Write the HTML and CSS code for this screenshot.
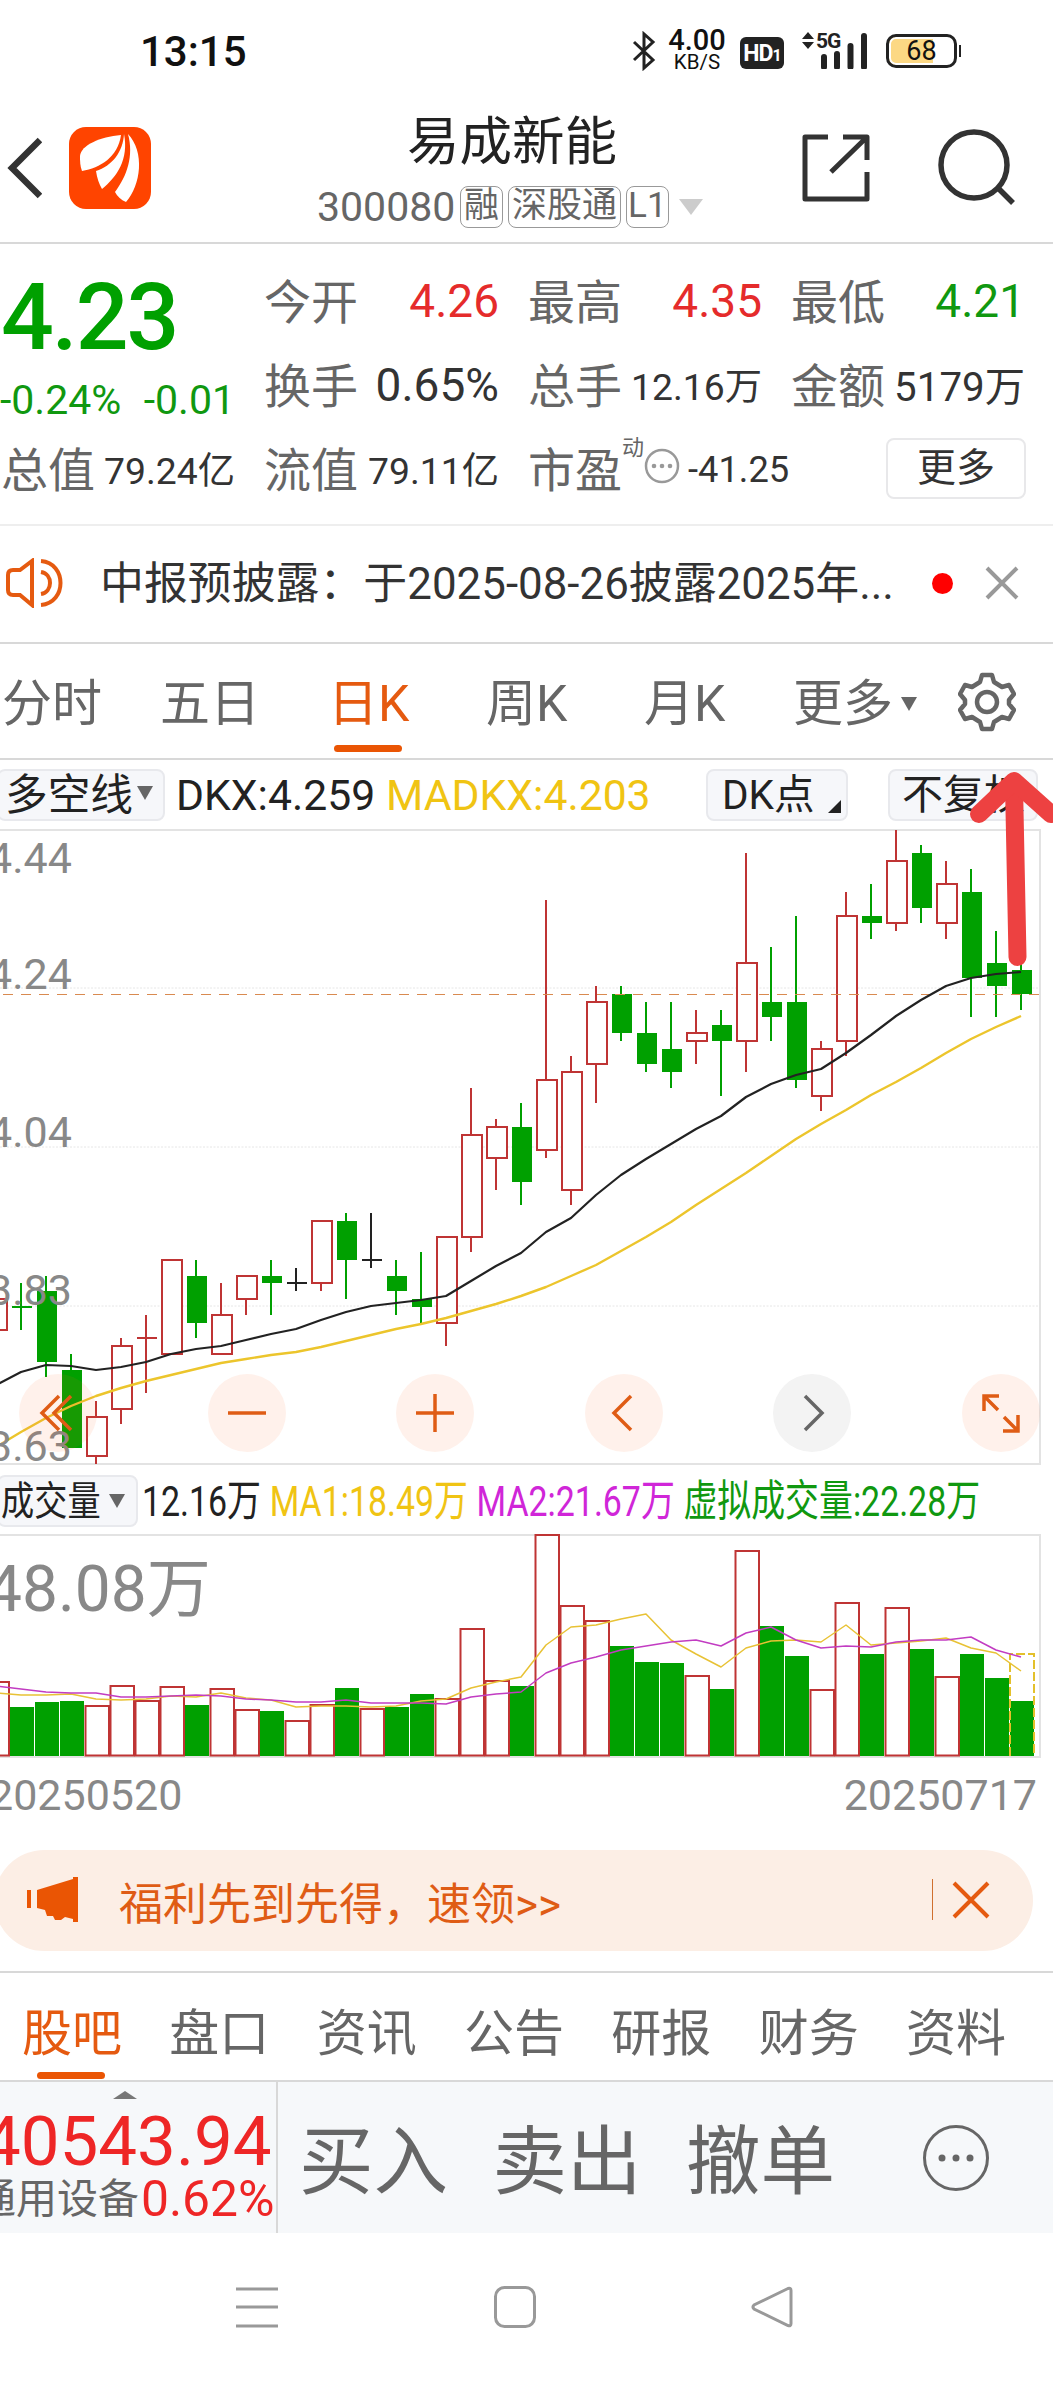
FILE: index.html
```html
<!DOCTYPE html>
<html lang="zh-CN">
<head>
    <meta charset="UTF-8">
    <meta name="viewport" content="width=device-width, initial-scale=1.0">
    <title>易成新能 300080</title>
    <link rel="stylesheet" href="styles.css">
</head>
<body>
<div class="page">

    <!-- Status bar -->
    <div class="status">
        <span class="clock">13:15</span>
        <div class="status-right">
            <svg class="bt" width="24" height="40" viewBox="0 0 24 40"><path d="M2 11l19 18-9 8V3l9 8L2 29" fill="none" stroke="#222" stroke-width="3"/></svg>
            <div class="speed"><b>4.00</b><i>KB/S</i></div>
            <span class="hd">HD<small>1</small></span>
            <svg class="signal" width="68" height="38" viewBox="0 0 68 38">
                <path d="M1 8l6-7 6 7zM1 11l6 7 6-7z" fill="#222"/>
                <text x="15" y="17" font-size="21">5G</text>
                <path d="M23 26v10M36 23v13M49.500 15v21M63 5v31" stroke="#222" stroke-width="6" stroke-linecap="round"/>
            </svg>
            <div class="battery"><span>68</span></div>
        </div>
    </div>

    <!-- Header -->
    <header class="header">
        <svg class="back" width="36" height="62" viewBox="0 0 36 62"><path d="M34 3L6 31l28 28" fill="none" stroke="#333" stroke-width="6.500"/></svg>
        <svg class="logo" width="82" height="82" viewBox="0 0 82 82">
            <rect width="82" height="82" rx="17" fill="#ff4400"/>
            <path d="M52 8C31 10 12 18 11 29c0 5 0 10 2 15 18-3 36-14 39-36z" fill="#fff"/>
            <path d="M55 7c-1 18-12 32-28 37 1 7 3 13 6 18C48 50 60 32 55 7z" fill="#fff"/>
            <path d="M59 7c6 22-1 42-13 58 2 4 6 8 11 10C72 58 76 25 59 7z" fill="#fff"/>
        </svg>
        <div class="title">
            <h1>易成新能</h1>
            <div class="code">
                <span>300080</span><em>融</em><em>深股通</em><em class="level">L1</em>
                <i class="tri-down"></i>
            </div>
        </div>
        <svg class="share" width="68" height="68" viewBox="0 0 68 68"><path d="M26 3H3v62h62V38M41 3h24v23M64 4L29 38" fill="none" stroke="#333" stroke-width="5" stroke-linejoin="round"/></svg>
        <svg class="search" width="78" height="78" viewBox="0 0 78 78"><circle cx="36" cy="36" r="33" fill="none" stroke="#333" stroke-width="5.500"/><path d="M59 58l16 16" stroke="#333" stroke-width="5.500"/></svg>
    </header>

    <!-- Quote -->
    <section class="quote">
        <div class="price">
            <strong>4.23</strong>
            <div><span>-0.24%</span><span>-0.01</span></div>
        </div>
        <div class="cell"><label>今开</label><b class="up">4.26</b></div>
        <div class="cell"><label>最高</label><b class="up">4.35</b></div>
        <div class="cell"><label>最低</label><b class="down">4.21</b></div>
        <div class="cell"><label>换手</label><b>0.65%</b></div>
        <div class="cell"><label>总手</label><b class="s37">12.16万</b></div>
        <div class="cell"><label>金额</label><b class="s40">5179万</b></div>
        <div class="cell"><label>总值</label><b class="s37">79.24亿</b></div>
        <div class="cell"><label>流值</label><b class="s37">79.11亿</b></div>
        <div class="cell pe">
            <label>市盈</label><sup>动</sup>
            <svg width="36" height="36" viewBox="0 0 36 36"><circle cx="18" cy="18" r="16" fill="none" stroke="#999" stroke-width="2.500"/><g fill="#999"><circle cx="10" cy="18" r="2.300"/><circle cx="18" cy="18" r="2.300"/><circle cx="26" cy="18" r="2.300"/></g></svg>
            <b>-41.25</b>
        </div>
        <div class="cell"><button class="more">更多</button></div>
    </section>

    <!-- Notice -->
    <section class="notice">
        <svg width="58" height="50" viewBox="0 0 58 50" fill="none" stroke="#e55a10" stroke-width="4">
            <path d="M26 3v44L14 37H7q-5 0-5-5V17q0-5 5-5h7z"/>
            <path d="M35 3c26 2 26 42 0 44M35 14c12 2 12 20 0 22"/>
        </svg>
        <p>中报预披露：于2025-08-26披露2025年...</p>
        <i class="dot"></i>
        <svg class="close" width="34" height="34" viewBox="0 0 34 34"><path d="M2 2l30 30M32 2L2 32" stroke="#999" stroke-width="4"/></svg>
    </section>

    <!-- Period tabs -->
    <nav class="periods">
        <a>分时</a><a>五日</a><a class="active">日K</a><a>周K</a><a>月K</a>
        <a>更多<i class="tri-small"></i></a>
        <svg width="58" height="60" viewBox="0 0 58 60" fill="none" stroke="#666" stroke-width="4.500">
            <path d="M24 3h10l2 7 8 5 7-2 5 9-5 6v4l5 6-5 9-7-2-8 5-2 7H24l-2-7-8-5-7 2-5-9 5-6v-4l-5-6 5-9 7 2 8-5z" stroke-linejoin="round"/>
            <circle cx="29" cy="30" r="10"/>
        </svg>
    </nav>

    <!-- K line -->
    <div class="indicators">
        <span class="pill pill-left">多空线<i class="tri-small"></i></span>
        <span class="dkx">DKX:4.259</span>
        <span class="madkx">MADKX:4.203</span>
        <span class="pill pill-dk">DK点<i class="corner"></i></span>
        <span class="pill pill-fq">不复权</span>
    </div>

    <section class="kline">
        <svg id="kline" width="1053" height="636" viewBox="0 829 1053 636"></svg>
        <span class="scale s1">4.44</span>
        <span class="scale s2">4.24</span>
        <span class="scale s3">4.04</span>
        <span class="scale s4">3.83</span>
        <span class="scale s5">3.63</span>
        <div class="tools">
            <svg viewBox="0 0 78 78"><path d="M40 22L23 39l17 17M52 22L35 39l17 17"/></svg>
            <svg viewBox="0 0 78 78"><path d="M20 39h38"/></svg>
            <svg viewBox="0 0 78 78"><path d="M20 39h38M39 20v38"/></svg>
            <svg viewBox="0 0 78 78"><path d="M46 22L29 39l17 17"/></svg>
            <svg class="off" viewBox="0 0 78 78"><path d="M32 22l17 17-17 17"/></svg>
            <svg viewBox="0 0 78 78"><path d="M37 22H22v15M23 23l13 13M41 57h15V41M55 56L42 43"/></svg>
        </div>
    </section>

    <!-- Volume -->
    <div class="indicators volume-line">
        <span class="pill pill-vol"><u>成交量</u><i class="tri-small"></i></span>
        <div class="narrow">
            <span>12.16万</span>
            <span class="madkx">MA1:18.49万</span>
            <span class="purple">MA2:21.67万</span>
            <span class="green">虚拟成交量:22.28万</span>
        </div>
    </div>
    <section class="volume">
        <svg id="volume" width="1053" height="224" viewBox="0 1534 1053 224"></svg>
        <span class="vol-max">48.08万</span>
    </section>
    <div class="dates"><span>20250520</span><span>20250717</span></div>

    <!-- Banner -->
    <section class="banner">
        <svg width="52" height="46" viewBox="0 0 52 46" fill="#ea5504"><path d="M0 13h4v18H0zM10 13L46 2V0h5v45h-5v-3l-8-2-4 3h-6l-2-4h-6l-2-6-8-2z"/></svg>
        <p>福利先到先得，速领&gt;&gt;</p>
        <i></i>
        <svg class="close" width="38" height="38" viewBox="0 0 38 38"><path d="M2 2l34 34M36 2L2 36" stroke="#e55a10" stroke-width="4"/></svg>
    </section>

    <nav class="tabs">
        <a class="active">股吧</a><a>盘口</a><a>资讯</a><a>公告</a><a>研报</a><a>财务</a><a>资料</a>
    </nav>

    <!-- Bottom bar -->
    <footer class="trade">
        <div class="index">
            <i class="tri-up"></i>
            <strong>40543.94</strong>
            <div><span>通用设备</span><b>0.62%</b></div>
        </div>
        <a>买入</a><a>卖出</a><a>撤单</a>
        <svg width="68" height="68" viewBox="0 0 68 68"><circle cx="34" cy="34" r="31.500" fill="none" stroke="#666" stroke-width="3"/><g fill="#666"><circle cx="20" cy="34" r="3.500"/><circle cx="34" cy="34" r="3.500"/><circle cx="48" cy="34" r="3.500"/></g></svg>
    </footer>

    <div class="system">
        <svg viewBox="0 0 44 44"><path d="M1 4h42M1 22h42M1 41h42"/></svg>
        <svg viewBox="0 0 44 44"><rect x="2.500" y="2.500" width="39" height="39" rx="9"/></svg>
        <svg viewBox="0 0 44 44"><path d="M38 3.500L4 20q-2 2 0 4l34 16.500q3 1 3-2v-33q0-3-3-2z"/></svg>
    </div>

    <!-- Hint arrow pointing at the settings icon -->
    <svg class="arrow" width="85" height="200" viewBox="968 768 85 200" fill="none" stroke="#ed4141" stroke-width="18" stroke-linecap="round" stroke-linejoin="round">
        <path d="M1014 785L1017.500 957"/>
        <path d="M979 814L1014 781L1051 814"/>
    </svg>
</div>

<script>
    // type (r = up, g = down, k = flat), high, body top, body bottom, low, volume top
    const days = [
        ["r", 1299, 1299, 1330, 1330, 1682], ["g", 1283, 1306, 1308, 1330, 1707],
        ["g", 1276, 1291, 1362, 1377, 1702], ["g", 1354, 1370, 1448, 1448, 1701],
        ["r", 1401, 1417, 1456, 1464, 1706], ["r", 1338, 1346, 1409, 1424, 1686],
        ["r", 1315, 1338, 1338, 1393, 1701], ["r", 1260, 1260, 1354, 1354, 1687],
        ["g", 1260, 1276, 1323, 1338, 1705], ["r", 1283, 1315, 1354, 1354, 1689],
        ["r", 1276, 1276, 1299, 1315, 1710], ["g", 1260, 1276, 1283, 1315, 1711],
        ["k", 1268, 1283, 1283, 1291, 1721], ["r", 1221, 1221, 1283, 1291, 1705],
        ["g", 1213, 1221, 1260, 1299, 1688], ["k", 1213, 1260, 1260, 1268, 1709],
        ["g", 1260, 1276, 1291, 1315, 1707], ["g", 1252, 1299, 1307, 1323, 1694],
        ["r", 1237, 1237, 1323, 1346, 1699], ["r", 1088, 1135, 1237, 1252, 1629],
        ["r", 1119, 1127, 1158, 1190, 1681], ["g", 1103, 1127, 1182, 1205, 1686],
        ["r", 900, 1080, 1150, 1158, 1535], ["r", 1056, 1072, 1190, 1205, 1606],
        ["r", 986, 1002, 1064, 1103, 1621], ["g", 986, 994, 1033, 1041, 1646],
        ["g", 1002, 1033, 1064, 1072, 1662], ["g", 1002, 1049, 1072, 1088, 1663],
        ["r", 1010, 1033, 1041, 1064, 1676], ["g", 1010, 1025, 1041, 1096, 1689],
        ["r", 853, 963, 1041, 1072, 1551], ["g", 947, 1002, 1017, 1041, 1626],
        ["g", 916, 1002, 1080, 1088, 1656], ["r", 1041, 1049, 1096, 1111, 1690],
        ["r", 892, 916, 1041, 1056, 1603], ["g", 884, 916, 923, 939, 1654],
        ["r", 830, 861, 923, 931, 1608], ["g", 845, 853, 908, 923, 1649],
        ["r", 861, 884, 923, 939, 1677], ["g", 869, 892, 978, 1017, 1654],
        ["g", 931, 963, 986, 1017, 1678], ["g", 960, 970, 994, 1010, 1701]
    ];
    const dkx = [1385, 1372, 1365, 1366, 1370, 1367, 1362, 1354, 1349, 1346, 1340, 1334, 1329, 1320, 1312, 1306, 1303, 1300, 1296, 1281, 1266, 1253, 1232, 1218, 1195, 1175, 1159, 1144, 1129, 1116, 1097, 1084, 1075, 1069, 1053, 1035, 1016, 1000, 986, 978, 974, 972];
    const madkx = [1447, 1432, 1418, 1406, 1396, 1388, 1381, 1375, 1369, 1363, 1359, 1355, 1352, 1347, 1341, 1335, 1329, 1324, 1318, 1311, 1304, 1296, 1287, 1276, 1265, 1251, 1237, 1222, 1205, 1189, 1173, 1156, 1139, 1124, 1110, 1095, 1082, 1068, 1053, 1039, 1027, 1016];
    const ma1 = [1693, 1695, 1695, 1694, 1699, 1700, 1699, 1696, 1697, 1693, 1698, 1700, 1707, 1706, 1706, 1707, 1706, 1701, 1699, 1688, 1682, 1677, 1645, 1627, 1625, 1619, 1614, 1640, 1654, 1667, 1648, 1641, 1640, 1642, 1625, 1645, 1643, 1641, 1638, 1648, 1653, 1671];
    const ma2 = [1686, 1689, 1692, 1693, 1693, 1697, 1697, 1696, 1695, 1696, 1699, 1700, 1702, 1702, 1700, 1703, 1703, 1703, 1704, 1697, 1694, 1692, 1673, 1663, 1657, 1650, 1646, 1642, 1640, 1646, 1633, 1627, 1640, 1648, 1646, 1647, 1642, 1640, 1640, 1637, 1650, 1657];

    const xAt = i => -4 + i * 25;
    const colors = { r: "#bf3434", g: "#00a000", k: "#222" };

    const path = (d, color, width, extra = "") =>
        `<path d="${d}" fill="none" stroke="${color}" stroke-width="${width}" ${extra}/>`;
    const curve = (points, color, width) =>
        path("M" + points.map((y, i) => `${xAt(i)} ${y}`).join("L"), color, width, 'stroke-linejoin="round"');

    const box = (type, x, w, top, bottom) => type === "g"
        ? `<rect x="${x}" y="${top}" width="${w}" height="${bottom - top}" fill="#00a000"/>`
        : `<rect x="${x}" y="${top}" width="${w}" height="${bottom - top}" fill="#fff" stroke="#bf3434" stroke-width="2"/>`;

    // Candles
    let k = path("M0 988H1040M0 1147H1040M0 1306H1040", "#e6e6e6", 1, 'stroke-dasharray="2 1.500"');
    k += path("M0 830H1040V1464H0", "#e3e3e3", 2);
    days.forEach(([type, high, top, bottom, low], i) => {
        const x = xAt(i);
        k += path(`M${x} ${high}V${top}M${x} ${bottom}V${low}`, colors[type], 2);
        k += top === bottom
            ? path(`M${x - 9} ${top}H${x + 11}`, colors[type], 2)
            : box(type, x - 9, 20, top, bottom);
    });
    k += path("M3 994.500H1040", "#d98a50", 1.200, 'stroke-dasharray="10 8"');
    k += curve(dkx, "#222", 2.200) + curve(madkx, "#ecc52c", 2.400);
    document.getElementById("kline").innerHTML = k;

    // Volume
    let v = path("M0 1535H1040V1757H0", "#e3e3e3", 2);
    days.forEach(([type, , , , , top], i) => {
        const x = xAt(i);
        v += type === "g" ? box("g", x - 11, 24, top, 1756) : box("r", x - 10.500, 23.500, top, 1755.500);
    });
    v += path("M1010 1756V1654H1034V1756", "#e3c02b", 2, 'stroke-dasharray="9 3"');
    v += curve(ma1, "#e8c235", 1.500) + curve(ma2, "#c23cc2", 1.500);
    document.getElementById("volume").innerHTML = v;
</script>
</body>
</html>
```

FILE: styles.css
```css
* {
    box-sizing: border-box;
}

body {
    margin: 0;
    background: #fff;
    color: #333;
    font-family: Roboto, "Noto Sans CJK SC", sans-serif;
}

h1, p {
    margin: 0;
    font-weight: 400;
}

b, i, em, u, label, strong {
    font-weight: 400;
    font-style: normal;
    text-decoration: none;
}

svg {
    display: block;
    flex: none;
}

.page {
    position: relative;
    width: 1053px;
    height: 2382px;
    overflow: hidden;
    display: flex;
    flex-direction: column;
    white-space: nowrap;
}

.page > * {
    flex: none;
}

/* Status bar */
.status {
    height: 102px;
    padding: 0 96px 0 140px;
    display: flex;
    justify-content: space-between;
    align-items: center;
    color: #111;
}

.clock {
    font-size: 42px;
    font-weight: 500;
}

.status-right {
    display: flex;
    align-items: center;
}

.speed {
    width: 60px;
    margin: 2px 13px 0 11px;
    text-align: center;
    font-weight: 500;
    line-height: 22px;
}

.speed b {
    display: block;
    font-size: 29px;
    line-height: 22px;
    font-weight: 500;
}

.speed i {
    font-size: 20.500px;
}

.hd {
    width: 44px;
    height: 32px;
    margin: 3px 17px 0 0;
    border-radius: 6px;
    background: #222;
    color: #fff;
    font-size: 23px;
    font-weight: 700;
    line-height: 33px;
    text-align: center;
    letter-spacing: -1px;
}

.hd small {
    font-size: 16px;
}

.signal {
    margin: -2px 17px 0 0;
}

.signal text {
    font-weight: 700;
    letter-spacing: -1px;
    fill: #222;
}

.battery {
    position: relative;
    width: 71px;
    height: 34px;
    border: 3px solid #222;
    border-radius: 10px;
    background: linear-gradient(90deg, #fcd884 67%, #fff 67%);
    box-shadow: inset 0 0 0 2px #fff;
    font-size: 27px;
    line-height: 29px;
    text-align: center;
}

.battery::after {
    content: "";
    position: absolute;
    right: -7px;
    top: 8px;
    width: 2px;
    height: 12px;
    background: #222;
}

/* Header */
.header {
    height: 142px;
    padding: 0 37px 0 6px;
    border-bottom: 2px solid #d8d8d8;
    display: flex;
}

.back {
    margin-top: 35px;
}

.logo {
    margin: 25px 0 0 27px;
}

.title {
    width: 503px;
    margin-left: 151px;
    padding-top: 6px;
}

.title h1 {
    padding-left: 105px;
    font-size: 52.500px;
    line-height: 68px;
    color: #222;
}

.code {
    display: flex;
    align-items: center;
    padding-left: 15px;
    margin-top: 9px;
    height: 44px;
    font-size: 41px;
    color: #666;
}

.code span {
    width: 143px;
}

.code em {
    height: 42px;
    margin-right: 5px;
    padding: 0 3px;
    border: 1.500px solid #999;
    border-radius: 8px;
    font-size: 35px;
    line-height: 38px;
}

.code .level {
    padding: 0 1px;
}

.tri-down {
    margin-left: 5px;
    border: 12px solid transparent;
    border-top: 16px solid #ccc;
    border-bottom: 0;
}

.share {
    margin: 32px 0 0;
}

.search {
    margin: 27px 0 0 68px;
}

/* Quote */
.quote {
    height: 282px;
    padding: 15px 0 0 1px;
    border-bottom: 2px solid #eee;
    display: grid;
    grid-template-columns: 234px 235px 234px 234px;
    grid-template-rows: repeat(3, 84px);
    column-gap: 29px;
}

.price {
    grid-row: span 2;
    color: #00a000;
}

.price strong {
    display: block;
    font-size: 93px;
    font-weight: 500;
    line-height: 118px;
    letter-spacing: -2px;
}

.price div {
    display: flex;
    justify-content: space-between;
    margin-left: -1px;
    font-size: 41px;
    line-height: 46px;
    color: #109810;
}

.cell {
    display: flex;
    align-items: center;
    justify-content: space-between;
    font-size: 46px;
}

.cell label {
    margin-top: -5px;
    font-size: 47px;
    color: #666;
}

.cell .up {
    color: #e52b2b;
}

.cell .down {
    color: #109810;
}

.cell .s37 {
    margin-top: -3px;
    font-size: 37.300px;
}

.cell .s40 {
    margin-top: -3px;
    font-size: 40.300px;
}

.pe {
    justify-content: flex-start;
}

.pe sup {
    align-self: flex-start;
    width: 26px;
    font-size: 22px;
    line-height: 42px;
    color: #666;
}

.pe svg {
    margin: -7px 8px 0 0;
}

.pe b {
    font-size: 36.300px;
}

.more {
    width: 140px;
    height: 61px;
    margin: -2px -1px 0 auto;
    border: 2px solid #e8e8ea;
    border-radius: 8px;
    background: #fff;
    color: #333;
    font: 39px/54px Roboto, "Noto Sans CJK SC", sans-serif;
}

/* Notice */
.notice {
    height: 118px;
    padding: 0 34px 2px 6px;
    border-bottom: 2px solid #d8d8d8;
    display: flex;
    align-items: center;
}

.notice p {
    width: 832px;
    padding-left: 36px;
    margin-top: -6px;
    font-size: 43.900px;
}

.dot {
    width: 21px;
    height: 21px;
    margin-left: 36px;
    border-radius: 50%;
    background: #f00;
}

.notice .close {
    margin-left: auto;
}

/* Period tabs */
.periods {
    height: 116px;
    padding-left: 2px;
    border-bottom: 2px solid #d8d8d8;
    display: grid;
    grid-template-columns: 158px 168px 158px 158px 149px 165px 58px;
    align-items: center;
    justify-items: start;
    font-size: 50px;
    color: #666;
}

.periods svg {
    margin-top: -4px;
}

.periods a {
    position: relative;
    line-height: 120px;
}

.active {
    color: #e55a10;
}

.active::after {
    content: "";
    position: absolute;
    left: 50%;
    bottom: 12px;
    width: 68px;
    height: 7px;
    margin-left: -35px;
    border-radius: 4px;
    background: #ea5504;
}

.tri-small {
    display: inline-block;
    margin-left: 8px;
    vertical-align: 10px;
    border: 8px solid transparent;
    border-top: 14px solid #666;
    border-bottom: 0;
}

/* Indicator lines */
.indicators {
    height: 69px;
    padding-top: 9px;
    display: flex;
    color: #222;
    font-size: 42.700px;
    line-height: 53px;
}

.pill {
    flex: none;
    height: 52px;
    border: 2px solid #e8e9ed;
    border-radius: 8px;
    background: #f6f7fa;
    line-height: 49px;
}

.pill-left {
    width: 168px;
    margin-left: -3px;
    padding-left: 6px;
    margin-right: 11px;
}

.pill-left .tri-small {
    margin-left: 4px;
}

.dkx {
    width: 210px;
}

.madkx {
    color: #f0c413;
}

.pill-dk {
    width: 142px;
    margin-left: auto;
    padding-left: 14px;
    font-size: 40.500px;
    position: relative;
}

.corner {
    position: absolute;
    right: 5px;
    bottom: 6px;
    border-left: 13px solid transparent;
    border-bottom: 13px solid #222;
}

.pill-fq {
    width: 150px;
    margin: 0 15px 0 40px;
    padding-left: 12px;
    font-size: 41px;
}

/* K line chart */
.kline {
    position: relative;
    height: 636px;
}

.scale {
    position: absolute;
    left: -12px;
    font-size: 43px;
    line-height: 44px;
    color: #888;
}

.s1 { top: 7px; }
.s2 { top: 123px; }
.s3 { top: 281px; }
.s4 { top: 439px; }
.s5 { top: 595px; }

.tools {
    position: absolute;
    left: 19px;
    right: 13px;
    top: 545px;
    display: flex;
    justify-content: space-between;
}

.tools svg {
    width: 78px;
    height: 78px;
    border-radius: 50%;
    background: rgba(255, 98, 30, 0.09);
    fill: none;
    stroke: #df5c15;
    stroke-width: 3.500;
}

.tools .off {
    background: #f3f3f3;
    stroke: #666;
}

/* Volume */
.volume-line {
    padding-top: 10px;
}

.pill-vol {
    width: 141px;
    margin-left: -3px;
    display: flex;
    align-items: center;
}

.pill-vol u {
    width: 99px;
    margin-left: 2px;
    font-size: 40px;
    transform: scaleX(0.83);
    transform-origin: left;
}

.pill-vol .tri-small {
    margin-left: 9px;
}

.narrow {
    display: flex;
    gap: 11px;
    margin-left: 4px;
    font-size: 43px;
    line-height: 52px;
    transform: scaleX(0.788);
    transform-origin: left;
}

.purple {
    color: #d026d8;
}

.green {
    color: #109810;
}

.volume {
    position: relative;
    height: 224px;
}

.vol-max {
    position: absolute;
    left: -14px;
    top: 16px;
    font-size: 64px;
    line-height: 80px;
    color: #888;
}

.dates {
    height: 92px;
    padding: 13px 16px 0 0;
    margin-left: -11px;
    display: flex;
    justify-content: space-between;
    font-size: 43px;
    line-height: 48px;
    color: #888;
}

/* Banner */
.banner {
    height: 101px;
    margin: 0 20px 0 -6px;
    padding: 0 43px 0 33px;
    border-radius: 51px;
    background: #fceee5;
    display: flex;
    align-items: center;
    color: #df5c15;
}

.banner p {
    margin: 0 auto 0 40px;
    font-size: 44px;
}

.banner svg,
.banner i {
    margin-top: -2px;
}

.banner i {
    width: 1px;
    height: 41px;
    margin-right: 19px;
    background: #d07030;
}

/* Content tabs */
.tabs {
    height: 111px;
    margin-top: 20px;
    padding: 0 47px 0 22px;
    border-top: 2px solid #d8d8d8;
    border-bottom: 2px solid #d8d8d8;
    display: flex;
    justify-content: space-between;
    font-size: 50px;
    color: #666;
}

.tabs a {
    position: relative;
    line-height: 123px;
}

.tabs .active {
    color: #e55a10;
}

.tabs .active::after {
    bottom: 1px;
}

/* Bottom bar */
.trade {
    height: 151px;
    padding-right: 63px;
    background: #f6f8fa;
    display: flex;
    color: #666;
}

.index {
    width: 278px;
    margin-right: 21px;
    border-right: 2px solid #d8d8d8;
    color: #ee2626;
}

.tri-up {
    display: block;
    width: 24px;
    margin: 9px 0 0 113px;
    border: 12px solid transparent;
    border-bottom: 8px solid #777;
    border-top: 0;
}

.index strong {
    display: block;
    margin-left: -18px;
    font-size: 69px;
    line-height: 86px;
}

.index div {
    display: flex;
    align-items: center;
    margin: -12px 0 0 -25px;
    font-size: 49.800px;
    line-height: 52px;
}

.index span {
    width: 166px;
    font-size: 41px;
    color: #666;
}

.trade a {
    width: 193.500px;
    font-size: 74.500px;
    line-height: 162px;
}

.trade svg {
    margin: 42px 0 0 auto;
}

/* System navigation */
.system {
    height: 150px;
    padding: 52px 259px 0 235px;
    display: flex;
    justify-content: space-between;
}

.system svg {
    width: 44px;
    height: 44px;
    fill: none;
    stroke: #999;
    stroke-width: 3;
}

.arrow {
    position: absolute;
    left: 968px;
    top: 768px;
}
```
